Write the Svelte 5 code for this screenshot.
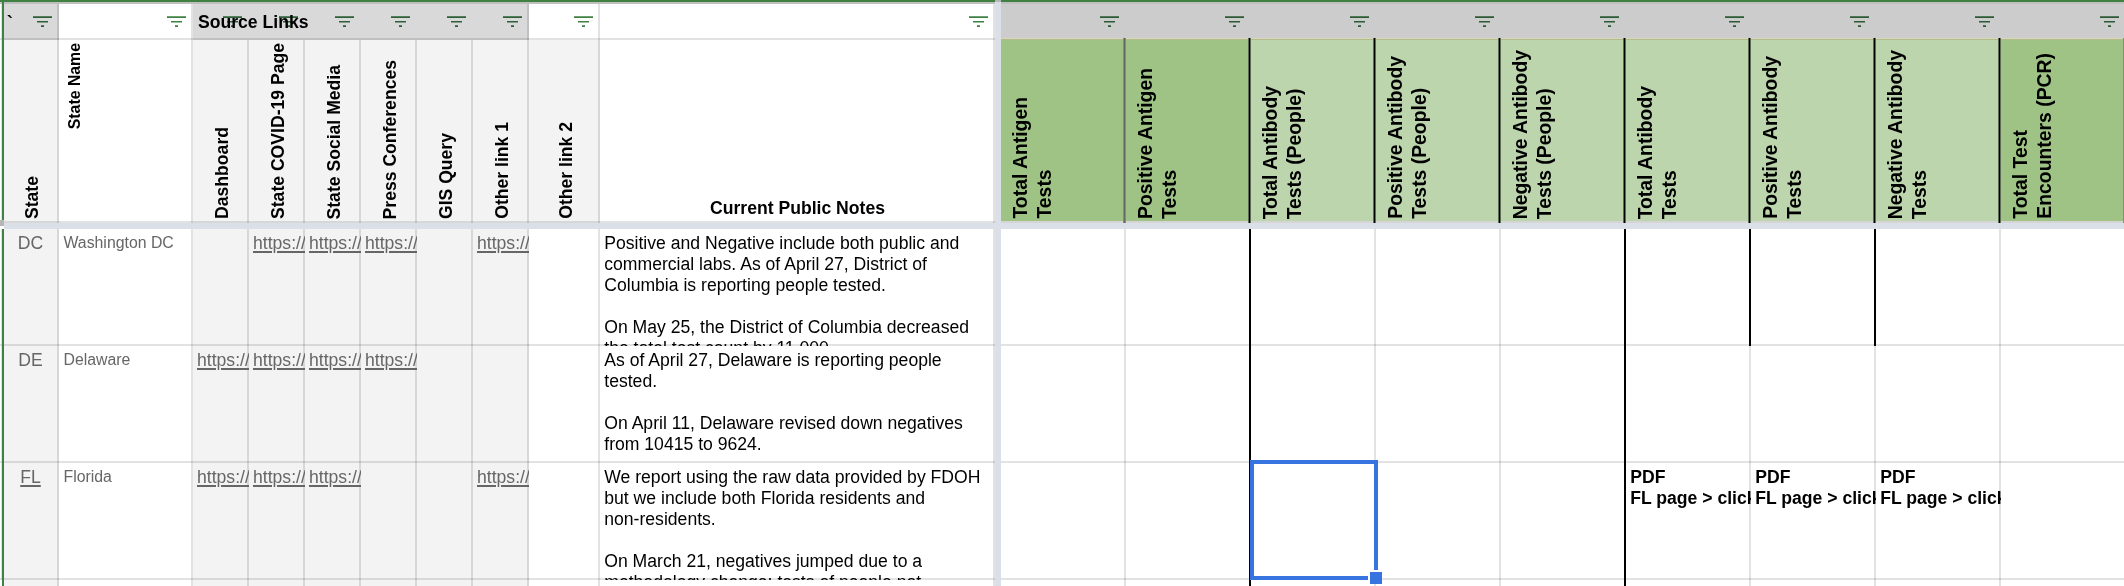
<script>
  const leftHeads = [
    { text: 'State', cls: 'state' },
    { text: 'State Name', cls: 'name' },
    { text: 'Dashboard', cls: 'link' },
    { text: 'State COVID-19 Page', cls: 'link' },
    { text: 'State Social Media', cls: 'link' },
    { text: 'Press Conferences', cls: 'link' },
    { text: 'GIS Query', cls: 'link' },
    { text: 'Other link 1', cls: 'link' },
    { text: 'Other link 2', cls: 'wide' }
  ];

  const testHeads = [
    { text: 'Total Antigen\nTests', tone: 'deep', edge: 'soft' },
    { text: 'Positive Antigen\nTests', tone: 'deep', edge: 'hard' },
    { text: 'Total Antibody\nTests (People)', tone: 'pale', edge: 'hard' },
    { text: 'Positive Antibody\nTests (People)', tone: 'pale', edge: 'hard' },
    { text: 'Negative Antibody\nTests (People)', tone: 'pale', edge: 'hard' },
    { text: 'Total Antibody\nTests', tone: 'pale', edge: 'hard' },
    { text: 'Positive Antibody\nTests', tone: 'pale', edge: 'hard' },
    { text: 'Negative Antibody\nTests', tone: 'pale', edge: 'hard' },
    { text: 'Total Test\nEncounters (PCR)', tone: 'deep', edge: 'soft' }
  ];

  const pdf = 'PDF\nFL page > click';
  const rows = [
    {
      code: 'DC',
      name: 'Washington DC',
      links: [0, 1, 1, 1, 0, 1],
      notes:
        'Positive and Negative include both public and\ncommercial labs. As of April 27, District of\nColumbia is reporting people tested.\n\nOn May 25, the District of Columbia decreased\nthe total test count by 11,000.',
      cells: ['', '', '', '', '', '', '', '', ''],
      dark: [1, 4, 5, 6]
    },
    {
      code: 'DE',
      name: 'Delaware',
      links: [1, 1, 1, 1, 0, 0],
      notes:
        'As of April 27, Delaware is reporting people\ntested.\n\nOn April 11, Delaware revised down negatives\nfrom 10415 to 9624.',
      cells: ['', '', '', '', '', '', '', '', ''],
      dark: [1, 4]
    },
    {
      code: 'FL',
      linked: true,
      name: 'Florida',
      links: [1, 1, 1, 0, 0, 1],
      notes:
        'We report using the raw data provided by FDOH\nbut we include both Florida residents and\nnon-residents.\n\nOn March 21, negatives jumped due to a\nmethodology change: tests of people not',
      cells: ['', '', '', '', '', pdf, pdf, pdf, ''],
      dark: [1, 4],
      selected: 2
    },
    {
      code: '',
      name: '',
      links: [0, 0, 0, 0, 0, 0],
      notes: '',
      cells: ['', '', '', '', '', '', '', '', ''],
      dark: [1, 4],
      partial: true
    }
  ];
</script>

{#snippet filter()}
  <svg class="filter" width="19" height="11" viewBox="0 0 19 11">
    <path d="M0 .3h19V2H0zM4 5h11v1.6H4zM8 9.3h3V11H8z" />
  </svg>
{/snippet}

<div class="sheet">
  <div class="top corner"></div>
  <div class="top main"></div>
  <div class="top freeze"></div>
  <div class="top tests"></div>

  <div class="gutter"></div>
  <div class="cell band tick">`{@render filter()}</div>
  <div class="cell">{@render filter()}</div>
  <div class="cell band source">
    <span>Source Links</span>
    {#each Array(6) as _}
      <div class="slot">{@render filter()}</div>
    {/each}
  </div>
  <div class="cell">{@render filter()}</div>
  <div class="cell">{@render filter()}</div>
  <div class="vbar"></div>
  {#each testHeads as _}
    <div class="cell steel">{@render filter()}</div>
  {/each}

  <div class="gutter plain"></div>
  {#each leftHeads as h}
    <div class="cell head {h.cls}"><span>{h.text}</span></div>
  {/each}
  <div class="cell notes-head">Current Public Notes</div>
  <div class="vbar"></div>
  {#each testHeads as h}
    <div class="cell test {h.tone} {h.edge}"><span>{h.text}</span></div>
  {/each}

  <div class="hstub"></div>
  <div class="hbar"></div>

  {#each rows as r}
    <div class="row" class:partial={r.partial}>
      <div class="gutter"></div>
      <div class="cell gray code" class:linked={r.linked}>{r.code}</div>
      <div class="cell place">{r.name}</div>
      {#each r.links as l}
        <div class="cell gray url">{l ? 'https://' : ''}</div>
      {/each}
      <div class="cell"></div>
      <div class="cell notes">{r.notes}</div>
      <div class="vbar"></div>
      {#each r.cells as c, i}
        <div class="cell value" class:dark={r.dark.includes(i)} class:open={r.selected === i} class:end={i === 8}>
          {c}
          {#if r.selected === i}
            <div class="selection"></div>
            <div class="handle"></div>
          {/if}
        </div>
      {/each}
    </div>
  {/each}
</div>

<style>
  :global(body) {
    margin: 0;
    background: #fff;
  }
  .sheet {
    --line: rgba(0, 0, 0, 0.115);
    display: grid;
    grid-template-columns: 4px 55px 134px repeat(6, 56px) 71px 395px 6px repeat(9, 125px);
    grid-template-rows: 4px 36px 183px 6px repeat(3, 117px) 6px;
    width: 2124px;
    height: 586px;
    overflow: hidden;
    font-family: 'Liberation Sans', Arial, sans-serif;
    font-size: 17.6px;
    line-height: 21px;
    color: #000;
  }
  .row {
    display: contents;
  }
  .partial {
    --line: transparent;
  }
  .partial .cell:not(.dark):not(.end) {
    box-shadow: inset -2px 0 rgba(0, 0, 0, 0.115);
  }
  .top {
    box-sizing: border-box;
    border-top: 2px solid #3f8143;
    background: #bfbfbf;
  }
  .top.corner {
    background: linear-gradient(90deg, #bfbfbf 2px, #3f8143 2px);
  }
  .top.main {
    grid-column: 2 / 12;
  }
  .top.freeze {
    border-color: #b7b7b7;
    background: #dadfe8;
  }
  .top.tests {
    grid-column: 13 / -1;
  }
  .gutter {
    border-right: 2px solid #3f8143;
    box-shadow: inset 0 -2px var(--line), inset -1px 0 var(--line);
  }
  .gutter.plain {
    box-shadow: inset -1px 0 var(--line);
  }
  .cell {
    position: relative;
    box-sizing: border-box;
    overflow: hidden;
    white-space: pre;
    box-shadow: inset -2px 0 var(--line), inset 0 -2px var(--line);
  }
  .vbar,
  .hbar {
    background: #dadfe8;
  }
  .hbar {
    grid-column: 2 / -1;
  }
  .hstub {
    background: #b7b7b7;
    height: 6px;
    margin-top: -3px;
    z-index: 1;
  }
  .filter {
    position: absolute;
    right: 7px;
    top: 12px;
    fill: #3f8143;
    mix-blend-mode: multiply;
  }
  .band {
    background: #d9d9d9;
  }
  .band .filter,
  .steel .filter {
    fill: #357040;
  }
  .tick {
    padding: 9px 0 0 3px;
    font-weight: bold;
  }
  .source {
    grid-column: 4 / 10;
    display: grid;
    grid-template-columns: repeat(6, 56px);
    font-weight: bold;
  }
  .source span {
    position: absolute;
    left: 5px;
    top: 8px;
  }
  .slot {
    position: relative;
  }
  .steel {
    background: #ccc;
    box-shadow: inset 0 -1px #aebd8b, inset 0 -2px #dcd5b8;
  }
  .head {
    background: #f3f3f3;
    display: flex;
    align-items: flex-end;
    padding-bottom: 4px;
    font-weight: bold;
  }
  .head span,
  .test span {
    writing-mode: vertical-rl;
    transform: rotate(180deg);
  }
  .head.state {
    padding-left: 18px;
  }
  .head.name {
    background: #fff;
    align-items: flex-start;
    padding: 3px 0 0 5px;
    font-size: 15.84px;
  }
  .head.link {
    padding-left: 19px;
  }
  .head.wide {
    padding-left: 27px;
  }
  .notes-head {
    display: flex;
    align-items: flex-end;
    justify-content: center;
    padding: 0 0 4px;
    font-weight: bold;
  }
  .test {
    display: flex;
    align-items: flex-end;
    overflow: visible;
    padding: 0 0 4px 6.5px;
    font-size: 19.36px;
    line-height: 24px;
    font-weight: bold;
    box-shadow: inset 0 -2px #d5d5d5;
  }
  .deep {
    background: #9fc385;
  }
  .pale {
    background: #bcd5ad;
  }
  .hard::after,
  .soft::after {
    content: '';
    position: absolute;
    right: 0;
    top: -2px;
    bottom: 0;
    width: 1px;
    border: solid #5f6c58;
    border-width: 0 1px;
    background: #000;
  }
  .soft::after {
    border-color: #7f9170;
    background: #666;
  }
  .gray {
    background: #f3f3f3;
  }
  .code {
    padding: 4px 2px 0 0;
    text-align: center;
    color: #666;
  }
  .place {
    padding: 3px 0 0 4.5px;
    font-size: 15.84px;
    color: #666;
  }
  .url {
    padding: 4px 0 0 4px;
    color: #666;
  }
  .url,
  .linked {
    text-decoration: underline;
    text-decoration-thickness: 2px;
    text-underline-offset: 2px;
  }
  .notes {
    padding: 4px 0 0 4.25px;
  }
  .value {
    padding: 4px 0 0 4.25px;
    font-weight: bold;
    white-space: pre-line;
    white-space-collapse: preserve-breaks;
    text-wrap: nowrap;
  }
  .value.dark {
    box-shadow: inset -2px 0 #000, inset 0 -2px var(--line);
  }
  .value.end {
    box-shadow: inset 0 -2px var(--line);
  }
  .value.open {
    overflow: visible;
    z-index: 1;
  }
  .selection {
    position: absolute;
    left: -1px;
    top: -3px;
    width: 120px;
    height: 112px;
    border: 4px solid #3874e0;
  }
  .handle {
    position: absolute;
    left: 117px;
    top: 107px;
    width: 12px;
    height: 12px;
    border: solid #fff;
    border-width: 2px 0 0 2px;
    background: #3874e0;
  }
</style>
